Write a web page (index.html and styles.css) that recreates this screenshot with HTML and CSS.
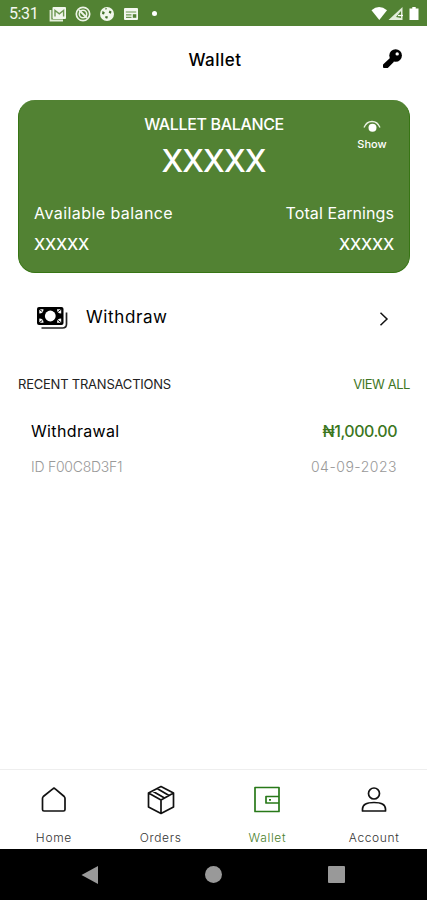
FILE: index.html
```html
<!DOCTYPE html>
<html lang="en">
<head>
<meta charset="utf-8">
<meta name="viewport" content="width=device-width, initial-scale=1">
<title>Wallet</title>
<link rel="stylesheet" href="styles.css">
</head>
<body>
<div class="status">
  <span class="clock">5:31</span>
  <div class="notices">
    <svg width="18" height="16" viewBox="0 0 18 16"><path d="M1.500 4v10.500H14" fill="none" stroke="#e4eedb" stroke-width="1.800"/><rect x="3.500" y="1" width="13.500" height="12" rx="1" fill="#f1f6ec"/><path d="M6 10.500V4.500l4.300 3.300 4.300-3.300v6" fill="none" stroke="#6c9750" stroke-width="1.400"/></svg>
    <svg width="16" height="16" viewBox="0 0 16 16" fill="none" stroke="#edf4e7"><circle cx="8" cy="8" r="6.700" stroke-width="1.700"/><circle cx="8" cy="8" r="3.700" stroke-width="1.600"/><path d="M4 4l8 8" stroke-width="2"/></svg>
    <svg width="16" height="16" viewBox="0 0 16 16"><circle cx="8" cy="8" r="7" fill="#f1f6ec"/><path d="M6 2.500l2-.5-1 2zM3.500 5l2.300 1.200L5 8.500 3 8zM10.500 4.500l2 1-.6 2.200-2.200-1zM6.500 10l2.500.4-.8 2.300-2-.6z" fill="#41702a"/></svg>
    <svg width="16" height="16" viewBox="0 0 16 16"><rect x="1" y="2" width="14" height="12" rx="1" fill="#f4f8f0"/><path d="M2.800 6h10.400M3 8.800h5.500M3 11.300h5.500" fill="none" stroke="#6c9750" stroke-width="1.200"/><path d="M9.800 8.200h3.500v3.600H9.800z" fill="#528233"/></svg>
    <i class="dot"></i>
  </div>
  <svg class="signals" width="50" height="16" viewBox="0 0 50 16" fill="#fff"><path d="M.5 4.200Q8-2 16 4.200L8.300 14z"/><path d="M31.500 1v13H17.500z" fill="#e3eddb"/><path d="M25 11l5-6v7z" fill="#528233"/><path d="M27 9.500h5" stroke="#fff" stroke-width="1.300"/><path d="M41.300 1h3.400v1.500h2.800V14h-9V2.500h2.800z"/></svg>
</div>

<header class="header">
  <h1 class="title">Wallet</h1>
  <svg class="key" width="22" height="22" viewBox="0 0 22 22"><path d="M11 9.500L3 17v2h3.300l6-6" fill="#000" stroke="#000" stroke-width="2" stroke-linejoin="round"/><circle cx="14.600" cy="7.500" r="6.300"/><circle cx="16.200" cy="5.900" r="1.700" fill="#fff"/></svg>
</header>

<main class="main">
  <section class="card">
    <div class="card-label">WALLET BALANCE</div>
    <div class="card-total">XXXXX</div>
    <div class="show">
      <svg width="18" height="13" viewBox="0 0 18 13"><path d="M1 7.500Q3.500 1.500 9 1.500T17 7.500" fill="none" stroke="#e8f0e1" stroke-width="1.300"/><circle cx="9.500" cy="7.700" r="4" fill="#fff"/></svg>
      <span>Show</span>
    </div>
    <div class="card-row names"><span class="available">Available balance</span><span class="earnings">Total Earnings</span></div>
    <div class="card-row values"><span>XXXXX</span><span>XXXXX</span></div>
  </section>

  <div class="action">
    <svg class="cash" width="32" height="24" viewBox="0 0 32 24"><rect x="1" y="1" width="26.500" height="18" rx="2"/><path d="M30.500 6.500V18q0 4-4 4H5.500" fill="none" stroke="#222" stroke-width="1.700"/><path d="M3.300 3.300h4.200q0 4.200-4.200 4.200zM25.200 3.300H21q0 4.200 4.200 4.200zM3.300 16.700h4.200q0-4.200-4.200-4.200zM25.200 16.700H21q0-4.200 4.200-4.200z" fill="#fff"/><path d="M3 3l3.300 2.600M25.500 3l-3.300 2.600M3 17l3.300-2.600M25.500 17l-3.300-2.600" stroke="#000" stroke-width="1"/><circle cx="14.300" cy="10" r="5.400" fill="#fff"/></svg>
    <span class="action-name">Withdraw</span>
    <svg class="chevron" width="10" height="16" viewBox="0 0 10 16"><path d="M1.500 1.700L8 8l-6.500 6.300" fill="none" stroke="#111" stroke-width="1.500"/></svg>
  </div>

  <div class="section-head"><span class="recent">RECENT TRANSACTIONS</span><span class="all">VIEW ALL</span></div>
  <div class="transaction">
    <div class="line"><span class="kind">Withdrawal</span><span class="amount">₦1,000.00</span></div>
    <div class="line meta"><span class="id">ID F00C8D3F1</span><span class="date">04-09-2023</span></div>
  </div>
</main>

<nav class="tabs">
  <div class="tab home"><svg width="30" height="30" viewBox="0 0 30 30"><path d="M3.500 13.500Q3.500 12.300 4.300 11.500L13.800 3.800Q15 2.700 16.200 3.800L25.200 11.500Q26 12.300 26 13.500V24.500q0 1.500-1.500 1.500H5Q3.500 26 3.500 24.500z"/></svg><span>Home</span></div>
  <div class="tab orders"><svg width="30" height="30" viewBox="0 0 30 30"><path d="M15 1.500L27.500 8v14L15 28.500 2.500 22V8zM2.500 8L15 15l12.500-7M15 15v13.500M6.800 6.200L18.500 13M11.500 3.700L23 10.400"/></svg><span>Orders</span></div>
  <div class="tab wallet"><svg width="30" height="30" viewBox="0 0 30 30"><path d="M3 2.500h24v24H3zM27 11.500H14v6.500h13"/><path d="M17 14.800h2"/></svg><span>Wallet</span></div>
  <div class="tab account"><svg width="30" height="30" viewBox="0 0 30 30"><circle cx="15" cy="8.500" r="5.500"/><path d="M3.500 26v-2q0-6.500 11.500-6.500T26.500 24v2z"/></svg><span>Account</span></div>
</nav>

<footer class="system">
  <svg width="18" height="20" viewBox="0 0 18 20"><path d="M17 1v18L.5 10z"/></svg>
  <i class="circle"></i>
  <i class="square"></i>
</footer>
</body>
</html>
```

FILE: styles.css
```css
* { box-sizing: border-box; }
body {
  margin: 0;
  height: 900px;
  display: flex;
  flex-direction: column;
  background: #fff;
  color: #000;
  font-family: Inter, "Liberation Sans", sans-serif;
  font-size: 16px;
  white-space: nowrap;
  overflow: hidden;
}
svg { display: block; flex: none; }

.status {
  height: 26px;
  padding: 1px 6px 0 9px;
  display: flex;
  align-items: center;
  background: #528233;
  color: #f4f8f0;
}
.clock { width: 40px; font: 16px/24px Roboto, sans-serif; letter-spacing: -0.4px; }
.notices { display: flex; align-items: center; gap: 8px; }
.dot { width: 5px; height: 5px; margin-left: 5px; border-radius: 50%; background: #fff; }
.signals { margin-left: auto; }

.header {
  height: 74px;
  padding: 0 24px 9px;
  display: grid;
  grid-template-columns: 22px 1fr 22px;
  align-items: center;
}
.title { grid-column: 2; margin: 2px 0 0 3px; text-align: center; font-size: 17px; font-weight: 550; line-height: 24px; letter-spacing: 0.5px; }
.key { grid-column: 3; }

.main { flex: 1; padding: 0 17px 0 18px; }
.card {
  position: relative;
  height: 173px;
  padding: 12px 15px 0;
  border: 1px solid #377514;
  border-width: 0 1px 1px;
  border-radius: 17px;
  background: #528233;
  color: #fff;
}
.card-label { text-align: center; font-weight: 500; line-height: 24px; letter-spacing: -0.35px; }
.card-total { padding: 2px 1px 0 0; text-align: center; font-size: 31px; font-weight: 450; line-height: 45px; letter-spacing: -0.9px; }
.show {
  position: absolute;
  top: 20px;
  right: 21px;
  width: 32px;
  display: flex;
  flex-direction: column;
  align-items: center;
  font-size: 11px;
  font-weight: 500;
  line-height: 20px;
}
.show span { margin-top: 1px; }
.card-row { display: flex; justify-content: space-between; line-height: 24px; }
.names { margin-top: 18px; }
.available { letter-spacing: 0.43px; }
.earnings { letter-spacing: 0.08px; }
.values { margin-top: 7px; font-weight: 500; letter-spacing: -0.2px; }

.action { height: 88px; padding: 0 21px 0 18px; display: flex; align-items: center; }
.cash { margin-top: 2px; }
.action-name { margin-left: 18px; font-size: 17px; letter-spacing: 0.6px; }
.chevron { margin: 3px 0 0 auto; }

.section-head { height: 46px; display: flex; justify-content: space-between; font-size: 13px; line-height: 46px; }
.recent { letter-spacing: -0.22px; color: #222; }
.all { color: #3f7624; letter-spacing: -0.45px; }
.transaction { padding: 12px 13px 0; }
.line { display: flex; justify-content: space-between; line-height: 24px; }
.kind { letter-spacing: 0.35px; }
.amount { color: #3b761d; font-weight: 500; letter-spacing: -0.5px; }
.meta { margin-top: 12px; color: #999; font-size: 14px; font-weight: 300; }
.id { letter-spacing: -0.25px; }
.date { letter-spacing: 0.5px; }

.tabs {
  height: 80px;
  border-top: 1px solid #eee;
  display: grid;
  grid-template-columns: repeat(4, 1fr);
  color: #333;
  font-size: 12px;
  font-weight: 300;
  letter-spacing: 0.65px;
}
.tab { display: flex; flex-direction: column; align-items: center; padding: 15px 0 0 1px; }
.tab svg { fill: none; stroke: #111; stroke-width: 1.7; stroke-linejoin: round; }
.tab span { line-height: 18px; margin-top: 14px; }
.wallet { color: #4a802b; }
.tab.wallet svg { stroke: #287919; }

.system {
  height: 51px;
  background: #000;
  display: flex;
  align-items: center;
  justify-content: space-between;
  padding: 0 82px 0 81px;
}
.system svg { fill: #999; }
.circle { width: 17px; height: 17px; border-radius: 50%; background: #999; }
.square { width: 17px; height: 17px; border-radius: 1px; background: #999; }
```
